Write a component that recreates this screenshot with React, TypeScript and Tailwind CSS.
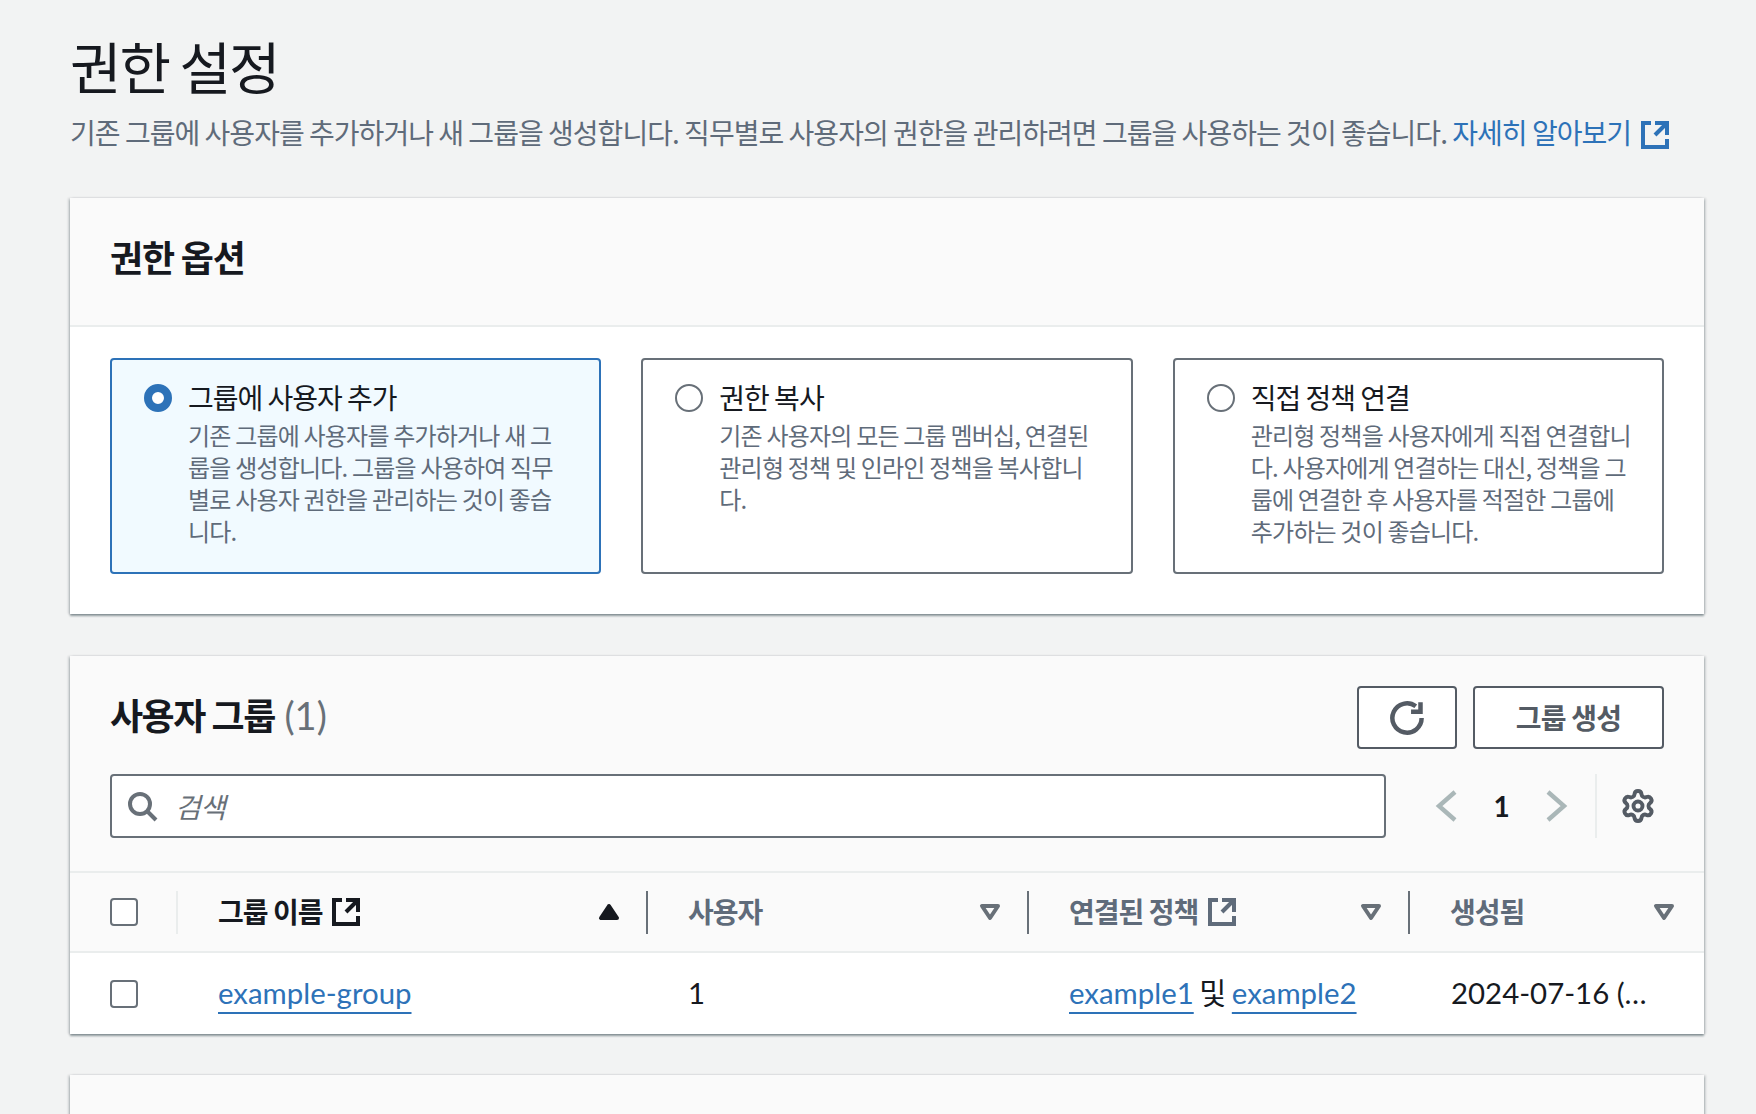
import { Settings } from 'lucide-react'

const tiles = [
  {
    id: 'group',
    title: '그룹에 사용자 추가',
    desc: '기존 그룹에 사용자를 추가하거나 새 그룹을 생성합니다. 그룹을 사용하여 직무별로 사용자 권한을 관리하는 것이 좋습니다.',
    selected: true,
  },
  {
    id: 'copy',
    title: '권한 복사',
    desc: '기존 사용자의 모든 그룹 멤버십, 연결된 관리형 정책 및 인라인 정책을 복사합니다.',
    selected: false,
  },
  {
    id: 'attach',
    title: '직접 정책 연결',
    desc: '관리형 정책을 사용자에게 직접 연결합니다. 사용자에게 연결하는 대신, 정책을 그룹에 연결한 후 사용자를 적절한 그룹에 추가하는 것이 좋습니다.',
    selected: false,
  },
]

function ExternalIcon({ className }: { className?: string }) {
  return (
    <svg viewBox="0 0 16 16" fill="none" stroke="currentColor" strokeWidth="2" className={className}>
      <path d="M14 8V2H8" />
      <path d="M14 2 8 8" />
      <path d="M6 2H2v12h12v-4" />
    </svg>
  )
}

function Caret({ filled }: { filled?: boolean }) {
  return (
    <svg viewBox="0 0 16 16" stroke="currentColor" strokeWidth="2" strokeLinejoin="round" className={`w-8 h-8 ${filled ? 'text-[#16191f]' : 'text-[#687078]'}`} fill={filled ? 'currentColor' : 'none'}>
      <path d={filled ? 'M4 11h8L8 5z' : 'M4 5h8l-4 6z'} />
    </svg>
  )
}

function Checkbox() {
  return <div className="w-7 h-7 rounded-[4px] border-2 border-[#687078] bg-white" />
}

function Divider({ light }: { light?: boolean }) {
  return <div className={`w-[2px] h-[43px] shrink-0 ${light ? 'bg-[#eaeded]' : 'bg-[#687078]'}`} />
}

export default function App() {
  return (
    <div className="h-[1114px] overflow-hidden bg-[#f2f3f3] pl-[70px] pr-[52px] pt-[33px] font-['Noto_Sans_CJK_KR',sans-serif] text-[#16191f]">
      <h1 className="text-[56px] leading-[64px] tracking-[-2px] font-normal">권한 설정</h1>
      <p className="mt-[19px] whitespace-nowrap text-[28px] leading-[32px] tracking-[-0.97px] text-[#5f6b7a]">
        기존 그룹에 사용자를 추가하거나 새 그룹을 생성합니다. 직무별로 사용자의 권한을 관리하려면 그룹을 사용하는 것이 좋습니다.{' '}
        <a className="text-[#2d72b8]">
          자세히 알아보기
          <ExternalIcon className="inline-block align-[-7px] w-8 h-8 ml-2" />
        </a>
      </p>

      <section className="mt-[47px] bg-white shadow-[0_2px_2px_rgba(0,28,36,0.4),2px_0_2px_rgba(0,28,36,0.12),-2px_0_2px_rgba(0,28,36,0.12)]">
        <div className="h-[129px] pt-9 px-10 bg-[#fafafa] border-b-2 border-[#eaeded]">
          <h2 className="text-[36px] leading-[44px] tracking-[-1.2px] font-bold">권한 옵션</h2>
        </div>
        <div className="grid grid-cols-3 gap-10 px-10 pt-[31px] pb-10">
          {tiles.map((tile) => (
            <div
              key={tile.id}
              className={`h-[216px] rounded-[4px] border-2 flex pt-[17px] pl-8 pr-[30px] ${
                tile.selected ? 'border-[#2d72b8] bg-[#f1faff]' : 'border-[#687078] bg-white'
              }`}
            >
              <div
                className={`mt-[7px] w-7 h-7 shrink-0 rounded-full bg-white ${
                  tile.selected ? 'border-[8px] border-[#2d72b8]' : 'border-2 border-[#687078]'
                }`}
              />
              <div className="ml-4 min-w-0">
                <div className="text-[28px] leading-[40px] tracking-[-1px]">{tile.title}</div>
                <div className="mt-[2px] text-[24px] leading-[32px] tracking-[-0.8px] text-[#5f6b7a]">{tile.desc}</div>
              </div>
            </div>
          ))}
        </div>
      </section>

      <section className="mt-[42px] bg-white shadow-[0_2px_2px_rgba(0,28,36,0.4),2px_0_2px_rgba(0,28,36,0.12),-2px_0_2px_rgba(0,28,36,0.12)]">
        <div className="bg-[#fafafa] px-10 pt-[30px] pb-[33px] border-b-2 border-[#eaeded]">
          <div className="flex items-center justify-between">
            <h2 className="mb-[7px] text-[36px] leading-[44px] tracking-[-1.5px] font-bold">
              사용자 그룹{' '}
              <span className="ml-[3px] font-normal font-['Lato',sans-serif] text-[38px] text-[#687078] tracking-normal">(1)</span>
            </h2>
            <div className="flex gap-4">
              <button className="w-[100px] h-[63px] rounded-[4px] border-2 border-[#545b64] bg-white flex items-center justify-center text-[#545b64]">
                <svg viewBox="0 0 16 16" fill="none" stroke="currentColor" strokeWidth="2" className="w-9 h-9">
                  <path d="M14.500 8a6.500 6.500 0 1 1-2.600-5.200" />
                  <path d="M14 1v4.200H9.800" />
                </svg>
              </button>
              <button className="w-[191px] h-[63px] pb-[2px] rounded-[4px] border-2 border-[#545b64] bg-white text-[28px] tracking-[-0.8px] font-bold text-[#545b64]">
                그룹 생성
              </button>
            </div>
          </div>
          <div className="mt-[25px] flex items-center">
            <div className="w-[1276px] shrink-0 h-16 rounded-[4px] border-2 border-[#687078] bg-white flex items-center pl-[14px] text-[#687078]">
              <svg viewBox="0 0 16 16" fill="none" stroke="currentColor" strokeWidth="2" className="w-8 h-8 shrink-0">
                <circle cx="7" cy="7" r="5" />
                <path d="m15 15-4.500-4.500" />
              </svg>
              <input
                placeholder="검색"
                className="ml-[17px] flex-1 outline-none bg-transparent text-[28px] tracking-[-0.8px] italic placeholder:text-[#687078]"
              />
            </div>
            <svg viewBox="0 0 16 16" fill="none" stroke="#aab7b8" strokeWidth="2.200" className="ml-[44px] w-8 h-8 shrink-0">
              <path d="M12.500 1 4.500 8l8 7" />
            </svg>
            <span className="w-[79px] text-center font-['Lato',sans-serif] text-[28px] font-bold">1</span>
            <svg viewBox="0 0 16 16" fill="none" stroke="#aab7b8" strokeWidth="2.200" className="w-8 h-8 shrink-0">
              <path d="m3.500 1 8 7-8 7" />
            </svg>
            <div className="ml-[22px] w-[2px] h-16 bg-[#eaeded]" />
            <Settings className="ml-[23px] w-9 h-9 text-[#545b64]" strokeWidth={2.6} />
          </div>
        </div>

        <div className="grid grid-cols-[108px_470px_381px_381px_1fr] h-[78px] bg-[#fafafa] items-center text-[28px] tracking-[-1px] font-bold text-[#5f6b7a]">
          <div className="flex items-center justify-between pl-10">
            <Checkbox />
            <Divider light />
          </div>
          <div className="flex items-center pl-10 text-[#16191f]">
            <span className="pb-[3px]">그룹 이름</span>
            <ExternalIcon className="w-8 h-8 ml-2" />
            <div className="ml-auto mr-[21px]"><Caret filled /></div>
            <Divider />
          </div>
          <div className="flex items-center pl-10">
            <span className="pb-[2px]">사용자</span>
            <div className="ml-auto mr-[21px]"><Caret /></div>
            <Divider />
          </div>
          <div className="flex items-center pl-10">
            <span className="pb-[3px]">연결된 정책</span>
            <ExternalIcon className="w-8 h-8 ml-2" />
            <div className="ml-auto mr-[21px]"><Caret /></div>
            <Divider />
          </div>
          <div className="flex items-center pl-10">
            <span className="pb-[2px]">생성됨</span>
            <div className="ml-auto mr-6"><Caret /></div>
          </div>
        </div>

        <div className="grid grid-cols-[108px_470px_381px_381px_1fr] h-[83px] items-center border-t-2 border-[#eaeded] font-['Lato','Noto_Sans_CJK_KR',sans-serif] text-[29.4px]">
          <div className="pl-10"><Checkbox /></div>
          <div className="pl-10">
            <a className="text-[#2d72b8] underline decoration-2 underline-offset-[8px]">example-group</a>
          </div>
          <div className="pl-10">1</div>
          <div className="pl-10 [word-spacing:-2px]">
            <a className="text-[#2d72b8] underline decoration-2 underline-offset-[8px]">example1</a>
            {' 및 '}
            <a className="text-[#2d72b8] underline decoration-2 underline-offset-[8px]">example2</a>
          </div>
          <div className="pl-[41px]">
            <div className="w-[196px] truncate">2024-07-16 (UTC+09:00)</div>
          </div>
        </div>
      </section>

      <section className="mt-[41px] h-[200px] bg-[#fafafa] shadow-[0_2px_2px_rgba(0,28,36,0.4),2px_0_2px_rgba(0,28,36,0.12),-2px_0_2px_rgba(0,28,36,0.12)]" />
    </div>
  )
}
